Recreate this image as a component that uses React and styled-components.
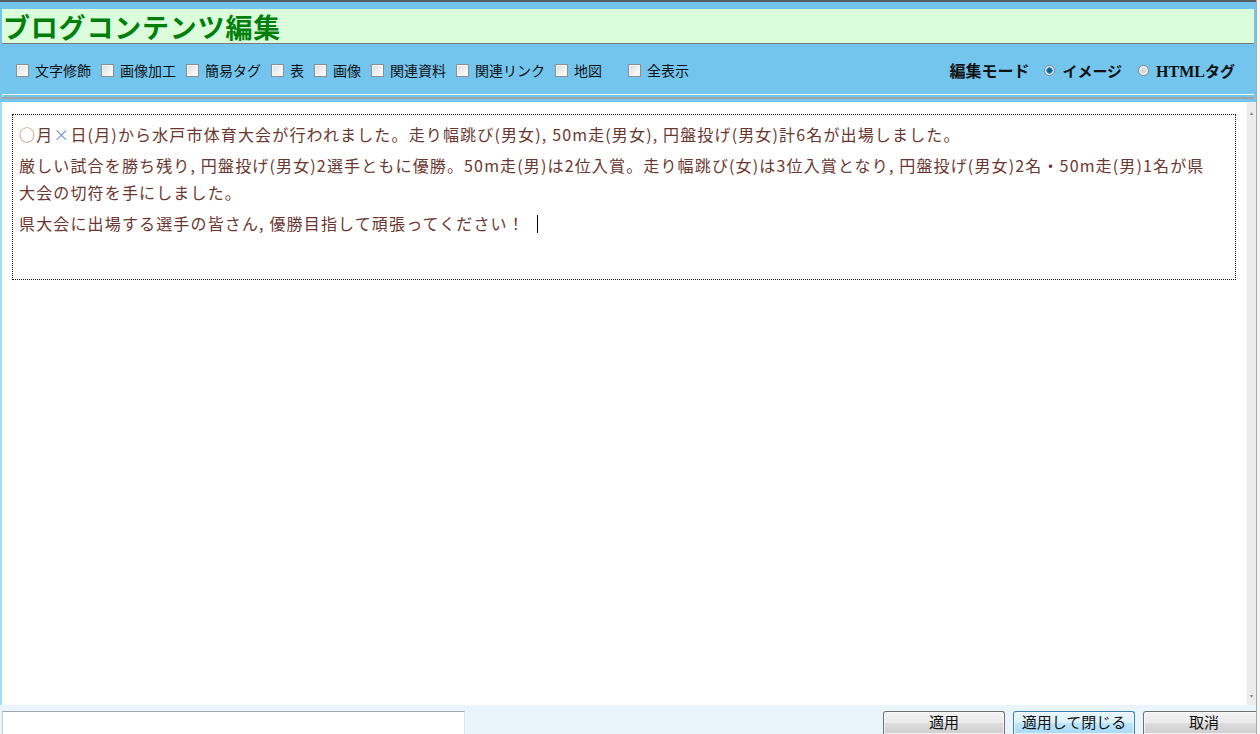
import React from 'react'
import styled, { createGlobalStyle } from 'styled-components'

const GlobalStyle = createGlobalStyle`
  html, body {
    margin: 0;
    padding: 0;
    background: #f0f0f0;
    overflow: hidden;
  }
  * { box-sizing: border-box; }
`;

const jp = `"Noto Sans CJK JP", "Liberation Sans", sans-serif`;

const tools = ['文字修飾', '画像加工', '簡易タグ', '表', '画像', '関連資料', '関連リンク', '地図'];

function App() {
    return <Screen>
        <GlobalStyle />
        <Frame>
            <TopStrip />
            <TitleBar>
                <Title>ブログコンテンツ編集</Title>
            </TitleBar>

            <Toolbar>
                <ToolList>
                    {tools.map(name => (
                        <Tool key={name}>
                            <CheckBox />
                            {name}
                        </Tool>
                    ))}
                    <Tool wide>
                        <CheckBox />
                        全表示
                    </Tool>
                </ToolList>

                <ModeSwitch>
                    <ModeLabel>編集モード</ModeLabel>
                    <Radio>
                        <RadioDot checked />
                        <RadioText>イメージ</RadioText>
                    </Radio>
                    <Radio>
                        <RadioDot />
                        <RadioText><Serif>HTML</Serif>タグ</RadioText>
                    </Radio>
                </ModeSwitch>
            </Toolbar>

            <Divider />

            <EditorArea>
                <EditorPane>
                    <EditBox>
                        <Para>
                            <Ring>○</Ring>月<Cross>×</Cross>日(月)から水戸市体育大会が行われました。走り幅跳び(男女), 50m走(男女), 円盤投げ(男女)計6名が出場しました。
                        </Para>
                        <Para>
                            厳しい試合を勝ち残り, 円盤投げ(男女)2選手ともに優勝。50m走(男)は2位入賞。走り幅跳び(女)は3位入賞となり, 円盤投げ(男女)2名・50m走(男)1名が県<br />
                            大会の切符を手にしました。
                        </Para>
                        <Para>
                            県大会に出場する選手の皆さん, 優勝目指して頑張ってください！<Caret />
                        </Para>
                    </EditBox>
                </EditorPane>
                <ScrollTrack>
                    <ScrollArrow>▴</ScrollArrow>
                    <ScrollArrow>▾</ScrollArrow>
                </ScrollTrack>
            </EditorArea>

            <BottomBar>
                <StatusInput />
                <Buttons>
                    <Button>適用</Button>
                    <Button primary>適用して閉じる</Button>
                    <Button>取消</Button>
                </Buttons>
            </BottomBar>
        </Frame>
        <WindowEdge />
    </Screen>
}

export default App

const Screen = styled.div`
    display: flex;
    width: 1260px;
    height: 734px;
    overflow: hidden;
    background: #f4f4f4;
`;

const Frame = styled.div`
    display: flex;
    flex-direction: column;
    width: 1256px;
    height: 734px;
    overflow: hidden;
    background: #74c5ee;
    border-top: 2px solid #565c62;
`;

const WindowEdge = styled.div`
    width: 4px;
    border-left: 1px solid #a8a8a8;
    background: #f6f6f6;
`;

const TopStrip = styled.div`
    height: 7px;
`;

const TitleBar = styled.div`
    height: 35px;
    margin: 0 2px;
    background: #dcfddc;
    border-bottom: 1px solid #7c7c7c;
    display: flex;
    align-items: center;
    padding-left: 1px;
`;

const Title = styled.h1`
    margin: 0;
    font-family: ${jp};
    font-size: 27px;
    font-weight: 700;
    line-height: 1;
    color: #00800a;
    letter-spacing: 0.8px;
`;

const Toolbar = styled.div`
    height: 50px;
    margin: 0 2px;
    display: flex;
    align-items: center;
    justify-content: space-between;
    padding: 2px 19px 0 14px;
    font-family: ${jp};
    color: #111;
`;

const ToolList = styled.div`
    display: flex;
    align-items: center;
`;

const Tool = styled.label`
    display: flex;
    align-items: center;
    gap: 6px;
    font-size: 14px;
    margin-right: ${p => (p.wide ? '0' : '10px')};
    margin-left: ${p => (p.wide ? '16px' : '0')};
`;

const CheckBox = styled.span`
    display: inline-block;
    width: 13px;
    height: 13px;
    border: 1px solid #8e8f8f;
    background: linear-gradient(135deg, #dcdcdc 0%, #f6f6f6 70%, #ffffff 100%);
    box-shadow: inset 0 0 0 1px #f4f4f4;
`;

const ModeSwitch = styled.div`
    display: flex;
    align-items: center;
    gap: 16px;
    font-weight: 700;
`;

const ModeLabel = styled.span`
    font-size: 16px;
    margin-right: -1px;
`;

const Radio = styled.label`
    display: flex;
    align-items: center;
    gap: 7px;
`;

const RadioText = styled.span`
    font-size: 15px;
`;

const RadioDot = styled.span`
    width: 11px;
    height: 11px;
    border-radius: 50%;
    border: 1px solid #8a8a8a;
    background: ${p => (p.checked
        ? 'radial-gradient(circle, #0c5e92 0 2px, #3aa0d8 2.5px 3px, #e8e8e8 3.5px)'
        : 'radial-gradient(circle, #d8d8d8 0 2px, #f2f2f2 4px)')};
`;

const Serif = styled.span`
    font-family: "Liberation Serif", serif;
    font-weight: 700;
    font-size: 16px;
`;

const Divider = styled.div`
    height: 5px;
    margin: 0 2px 3px;
    border-top: 1px solid #ffffff;
    border-bottom: 2px solid #a3a3a3;
    box-shadow: inset 1px 0 0 #ffffff;
`;

const EditorArea = styled.div`
    flex: 1;
    display: flex;
    padding-left: 2px;
    background: #a3ddf6;
    min-height: 0;
`;

const EditorPane = styled.div`
    flex: 1;
    background: #ffffff;
    padding: 12px 10px 0 10px;
`;

const EditBox = styled.div`
    height: 166px;
    border: 1px dotted #111;
    padding: 6px 6px 0 6px;
    font-family: ${jp};
    font-size: 16px;
    color: #6a3730;
    letter-spacing: 1.15px;
    line-height: 27px;
`;

const Para = styled.p`
    margin: 0 0 4px 0;
    white-space: nowrap;
`;

const Ring = styled.span`
    color: #b9814a;
`;

const Cross = styled.span`
    color: #7b92d6;
`;

const Caret = styled.span`
    display: inline-block;
    width: 1px;
    height: 18px;
    margin-left: 12px;
    vertical-align: -3px;
    background: #000;
`;

const ScrollTrack = styled.div`
    width: 10px;
    background: #ececec;
    border-left: 1px solid #f8f8f8;
    display: flex;
    flex-direction: column;
    justify-content: space-between;
    align-items: center;
    padding: 8px 0 6px;
    font-size: 6px;
    color: #888;
    font-family: "DejaVu Sans", sans-serif;
`;

const ScrollArrow = styled.span`
    line-height: 1;
`;

const BottomBar = styled.div`
    height: 29px;
    display: flex;
    align-items: flex-end;
    justify-content: space-between;
    background: #e9f5fb;
    padding-left: 2px;
`;

const StatusInput = styled.div`
    width: 463px;
    height: 23px;
    background: #ffffff;
    border-top: 1px solid #a4a8ae;
    border-left: 1px solid #c6cbd2;
    border-right: 1px solid #dde3ea;
`;

const Buttons = styled.div`
    display: flex;
    gap: 8px;
    margin-right: -9px;
`;

const Button = styled.button`
    width: 122px;
    height: 23px;
    padding: 0 0 3px;
    border-radius: 3px 3px 0 0;
    border: 1px solid ${p => (p.primary ? '#3c7fb1' : '#707070')};
    border-bottom: none;
    background: ${p => (p.primary
        ? 'linear-gradient(#e9f6fd 0%, #d9f0fc 50%, #bee6fd 51%, #a7d9f5 100%)'
        : 'linear-gradient(#f2f2f2 0%, #ebebeb 50%, #dddddd 51%, #cfcfcf 100%)')};
    box-shadow: inset 0 0 0 1px rgba(255, 255, 255, 0.7);
    font-family: ${jp};
    font-size: 15px;
    line-height: 18px;
    color: #111;
`;
